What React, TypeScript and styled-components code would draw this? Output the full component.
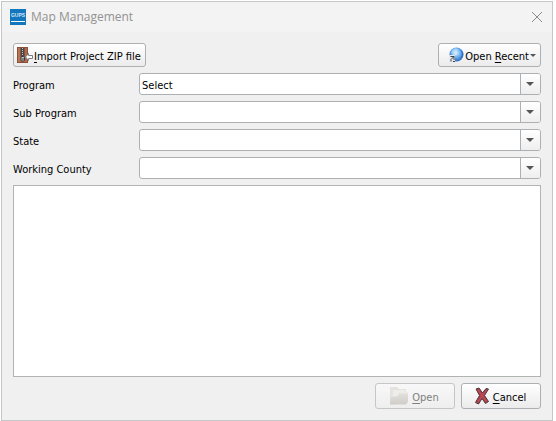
import React, { useState } from "react";
import styled, { createGlobalStyle } from "styled-components";

const GlobalStyle = createGlobalStyle`
  *, *::before, *::after { box-sizing: border-box; }
  html, body, #root { height: 100%; }
  body {
    margin: 0;
    background: #ffffff;
    color: #000000;
    font-family: "DejaVu Sans Condensed", "Noto Sans", sans-serif;
    font-size: 11px;
    line-height: 16px;
  }
`;

const Page = styled.div`
  display: flex;
  height: 100%;
  padding: 1px 3px 0 1px;
`;

const Window = styled.main`
  flex: 1;
  display: flex;
  flex-direction: column;
  border: 1px solid #c3c7c7;
  background: #f0f0f0;
`;

const TitleBar = styled.header`
  display: flex;
  align-items: center;
  gap: 5px;
  height: 30px;
  padding: 0 9px 0 8px;
  background: #f3f3f3;
`;

const Title = styled.h1`
  flex: 1;
  margin: 0;
  color: #929292;
  font-family: "Open Sans", "Noto Sans", sans-serif;
  font-size: 12px;
  font-weight: 400;
`;

const CloseButton = styled.button`
  display: flex;
  padding: 0;
  border: 0;
  background: none;
`;

const Content = styled.form`
  flex: 1;
  display: flex;
  flex-direction: column;
  gap: 6px;
  padding: 11px 11px;
`;

const Toolbar = styled.div`
  display: flex;
  justify-content: space-between;
`;

const Button = styled.button<{ $size?: "tool" | "menu" | "action" }>`
  display: flex;
  align-items: center;
  justify-content: ${({ $size }) => ($size === "menu" ? "flex-end" : "center")};
  gap: ${({ $size }) => ($size === "action" ? 3 : 1)}px;
  height: ${({ $size }) => ($size === "action" ? 26 : 24)}px;
  min-width: ${({ $size }) => ($size === "action" ? 80 : 103)}px;
  padding: ${({ $size }) => ($size === "menu" ? "0 4px 0 8px" : "0 4px 0 2px")};
  border: 1px solid #adb0b2;
  border-radius: 3px;
  background: linear-gradient(#ffffff, #ebebeb);
  color: #000000;
  font: inherit;
  white-space: nowrap;

  svg { flex: none; }
  span { padding-top: 3px; }
  u { text-underline-offset: 2px; }

  &:disabled {
    border-color: #c6c6c6;
    background: linear-gradient(#f8f8f8, #eeeeee);
    color: #808080;
  }
`;

const Fields = styled.div`
  display: grid;
  grid-template-columns: 126px 1fr;
  align-items: center;
  gap: 6px 0;
`;

const Label = styled.label`
  padding-top: 4px;
`;

const SelectBox = styled.div`
  position: relative;
  display: flex;
`;

const Select = styled.select`
  appearance: none;
  width: 100%;
  height: 22px;
  padding: 4px 24px 0 2px;
  border: 1px solid #adb0b2;
  border-radius: 3px;
  background: #ffffff;
  color: #000000;
  font: inherit;
`;

const SelectArrow = styled.span`
  position: absolute;
  inset: 1px 1px 1px auto;
  display: flex;
  align-items: center;
  justify-content: center;
  width: 20px;
  padding-right: 2px;
  border-left: 1px solid #adb0b2;
  border-radius: 0 2px 2px 0;
  background: linear-gradient(#ffffff, #eeeeee);
  pointer-events: none;
`;

const ProjectList = styled.div`
  flex: 1;
  border: 1px solid #b2b4b4;
  background: #ffffff;
`;

const Actions = styled.footer`
  display: flex;
  justify-content: flex-end;
  gap: 6px;
`;

const LogoText = styled.text`
  font-family: "Liberation Sans", sans-serif;
  font-size: 5px;
  font-weight: 700;
  fill: #cfe6f5;
`;

const AppLogo = () => (
  <svg width="16" height="16" viewBox="0 0 16 16" aria-hidden="true">
    <rect width="16" height="16" fill="#1477bd" />
    <LogoText x="8" y="8" textAnchor="middle">GUPS</LogoText>
    <path d="M1 12h14v1H1z" fill="#fff" />
  </svg>
);

const CloseIcon = () => (
  <svg width="12" height="12" viewBox="0 0 12 12" aria-hidden="true">
    <path d="M1 1l10 10M11 1L1 11" stroke="#8c8c8c" fill="none" />
  </svg>
);

const ZipIcon = () => (
  <svg width="17" height="16" viewBox="0 0 17 16" aria-hidden="true">
    <rect x="1.5" y=".5" width="10" height="15" fill="#b0694a" stroke="#8a5039" />
    <path d="M2 1h2v14H2z" fill="#bd7450" />
    <path d="M4.500 1h4v9h-4z" fill="#4b4544" />
    <path d="M6 1.500h1m-1 2h1m-1 2h1m-1 2h1m-1 2h1" stroke="#c9c9c9" />
    <rect x="5" y="9.500" width="3.500" height="4.500" rx="1" fill="#bcc4c9" stroke="#363a3c" />
    <path d="M6 12h2" stroke="#3c4144" />
    <path d="M9.500 10l3-3.500v2h4v3h-4v2z" fill="#fff" stroke="#7c7c7c" />
  </svg>
);

const GlobeIcon = () => (
  <svg width="16" height="16" viewBox="0 0 16 16" aria-hidden="true">
    <defs>
      <radialGradient id="globe" cx="48%" cy="38%" r="62%">
        <stop offset="0" stopColor="#d8f0ff" />
        <stop offset=".5" stopColor="#6cb0ee" />
        <stop offset="1" stopColor="#2766c4" />
      </radialGradient>
    </defs>
    <circle cx="8.500" cy="7.500" r="7" fill="url(#globe)" />
    <path d="M4 3l4-2 2 2-2 2 1 3-3 1-3-3z" fill="#e4f6ff" opacity=".4" />
    <path d="M11 2c3 2 4 6 1 10 4-2 5-7-1-10z" fill="#2464bd" opacity=".7" />
    <rect x="1" y="8" width="6" height="7.500" rx="1" fill="#e6e9ec" />
    <path d="M2.500 9.500h3.500v3.500M6 9.500l-3 3v2M5 14.500h2" fill="none" stroke="#3c4248" />
  </svg>
);

const FolderIcon = () => (
  <svg width="20" height="20" viewBox="0 0 20 20" aria-hidden="true">
    <defs>
      <linearGradient id="folder" x2="0" y2="1">
        <stop stopColor="#e3e1dd" />
        <stop offset="1" stopColor="#d0cdc9" />
      </linearGradient>
    </defs>
    <path d="M1 1h7l2 2h7v14l-16 2z" fill="#e4e3df" />
    <path d="M4 4h12v6H4z" fill="#eeedea" />
    <path d="M2 10h6l2-3h9v9l-2 2.500H1z" fill="url(#folder)" />
    <path d="M2 10h6l2-3h9" fill="none" stroke="#eceae7" />
  </svg>
);

const CancelIcon = () => (
  <svg width="16" height="18" viewBox="0 0 16 18" aria-hidden="true">
    <path
      d="M2 2l3-1 3.500 5L12 1.500l2.500.5-4 6.500 4 6-3 2-3.500-5L4.500 17 1.500 15.500l4-7z"
      fill="#b23f49"
      stroke="#483a3e"
      strokeLinejoin="round"
    />
    <path d="M4 3l8 11M12.500 3L4 15" stroke="#c4505a" fill="none" />
  </svg>
);

const Caret = ({ small = false }: { small?: boolean }) => (
  <svg width={small ? 6 : 8} height={small ? 3 : 4} viewBox="0 0 8 4" aria-hidden="true">
    <path d="M0 0h8L4 4z" fill="#555555" />
  </svg>
);

const fields = [
  { id: "program", label: "Program", options: ["Select"] },
  { id: "sub-program", label: "Sub Program", options: [""] },
  { id: "state", label: "State", options: [""] },
  { id: "working-county", label: "Working County", options: [""] },
];

export default function App() {
  const [open, setOpen] = useState(true);

  return (
    <>
      <GlobalStyle />
      {open && (
        <Page>
          <Window>
            <TitleBar>
              <AppLogo />
              <Title>Map Management</Title>
              <CloseButton type="button" aria-label="Close" onClick={() => setOpen(false)}>
                <CloseIcon />
              </CloseButton>
            </TitleBar>
            <Content onSubmit={(event) => event.preventDefault()}>
              <Toolbar>
                <Button type="button">
                  <ZipIcon />
                  <span><u>I</u>mport Project ZIP file</span>
                </Button>
                <Button type="button" $size="menu" aria-haspopup="menu">
                  <GlobeIcon />
                  <span>Open <u>R</u>ecent</span>
                  <Caret small />
                </Button>
              </Toolbar>
              <Fields>
                {fields.map(({ id, label, options }) => (
                  <React.Fragment key={id}>
                    <Label htmlFor={id}>{label}</Label>
                    <SelectBox>
                      <Select id={id}>
                        {options.map((option) => (
                          <option key={option}>{option}</option>
                        ))}
                      </Select>
                      <SelectArrow><Caret /></SelectArrow>
                    </SelectBox>
                  </React.Fragment>
                ))}
              </Fields>
              <ProjectList role="listbox" aria-label="Projects" tabIndex={0} />
              <Actions>
                <Button type="submit" $size="action" disabled>
                  <FolderIcon />
                  <span><u>O</u>pen</span>
                </Button>
                <Button type="button" $size="action" onClick={() => setOpen(false)}>
                  <CancelIcon />
                  <span><u>C</u>ancel</span>
                </Button>
              </Actions>
            </Content>
          </Window>
        </Page>
      )}
    </>
  );
}
